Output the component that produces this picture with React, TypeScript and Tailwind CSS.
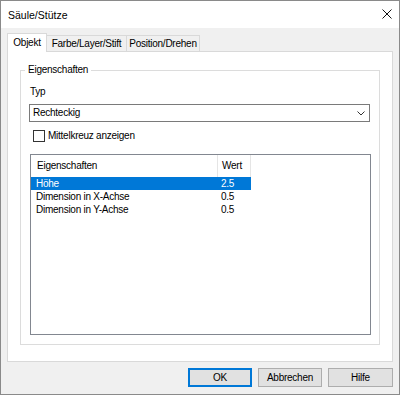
import React from "react";

const rows = [
  { name: "Höhe", value: "2.5", selected: true },
  { name: "Dimension in X-Achse", value: "0.5", selected: false },
  { name: "Dimension in Y-Achse", value: "0.5", selected: false },
];

export default function App() {
  return (
    <div className="w-[400px] h-[395px] border border-[#8a8a8a] flex flex-col font-['Liberation_Sans',Arial,sans-serif] text-[10px] leading-[12px] text-black tracking-[-0.25px] overflow-hidden">
      {/* Title bar */}
      <div className="h-[27px] bg-white flex items-center justify-between pl-[7px] pr-[7px] shrink-0">
        <span className="text-[10.5px] tracking-[0px]">Säule/Stütze</span>
        <svg width="10" height="10" viewBox="0 0 10 10" className="mb-[2px]">
          <path d="M0.5 0.5 L9.5 9.5 M9.5 0.5 L0.5 9.5" stroke="#111" strokeWidth="1" fill="none" />
        </svg>
      </div>

      {/* Body */}
      <div className="flex-1 bg-[#f0f0f0] px-[6px] pt-[5px] flex flex-col">
        {/* Tabs */}
        <div className="flex items-end h-[18px]">
          <div className="relative z-10 -mb-px w-[40px] h-[19px] bg-white border border-b-0 border-[#d9d9d9] flex items-center justify-center pb-[1px]">
            Objekt
          </div>
          <div className="w-[80px] h-[16px] border-t border-r border-[#d9d9d9] flex items-center justify-center">
            Farbe/Layer/Stift
          </div>
          <div className="w-[73px] h-[16px] border-t border-r border-[#d9d9d9] flex items-center justify-center">
            Position/Drehen
          </div>
        </div>

        {/* Tab panel */}
        <div className="w-[386px] h-[311px] bg-white border border-[#d9d9d9] pt-[12px] pl-[12px]">
          <fieldset className="w-[360px] h-[281px] border border-[#dcdcdc]">
            <legend className="ml-[4px] px-[3px] leading-[12px]">Eigenschaften</legend>
            <div className="pl-[8px] pr-[9px] flex flex-col">
              <div className="mt-[10px] pl-[1px]">Typ</div>
              <div className="mt-[6px] h-[18px] w-full border border-[#7a7a7a] bg-white flex items-center justify-between pl-[3px] pr-[4px]">
                <span>Rechteckig</span>
                <svg width="8" height="5" viewBox="0 0 8 5">
                  <path d="M0.5 0.5 L4 4 L7.5 0.5" stroke="#333" strokeWidth="1" fill="none" />
                </svg>
              </div>
              <div className="mt-[8px] h-[12px] flex items-center pl-[4px]">
                <div className="w-[12px] h-[12px] border border-[#333] bg-white shrink-0" />
                <span className="ml-[3px]">Mittelkreuz anzeigen</span>
              </div>
              <div className="mt-[12px] ml-[1px] h-[181px] w-full border border-[#828790] bg-white flex flex-col">
                <div className="h-[22px] flex shrink-0">
                  <div className="w-[187px] border-r border-[#e5e5e5] flex items-center pl-[6px]">Eigenschaften</div>
                  <div className="w-[33px] border-r border-[#e5e5e5] flex items-center pl-[4px]">Wert</div>
                </div>
                {rows.map((r) => (
                  <div
                    key={r.name}
                    className={
                      r.selected
                        ? "h-[13px] w-[220px] flex items-center bg-[#0078d7] text-white"
                        : "h-[13px] w-[220px] flex items-center"
                    }
                  >
                    <div className="w-[187px] pl-[5px]">{r.name}</div>
                    <div className="w-[33px] pl-[3px]">{r.value}</div>
                  </div>
                ))}
              </div>
            </div>
          </fieldset>
        </div>

        {/* Buttons */}
        <div className="mt-[6px] flex justify-end gap-[6px]">
          <button className="w-[64px] h-[19px] border-2 border-[#0078d7] bg-[#e1e1e1] flex items-center justify-center">
            OK
          </button>
          <button className="w-[64px] h-[19px] border border-[#adadad] bg-[#e1e1e1] flex items-center justify-center">
            Abbrechen
          </button>
          <button className="w-[65px] h-[19px] border border-[#adadad] bg-[#e1e1e1] flex items-center justify-center">
            Hilfe
          </button>
        </div>
      </div>
    </div>
  );
}
